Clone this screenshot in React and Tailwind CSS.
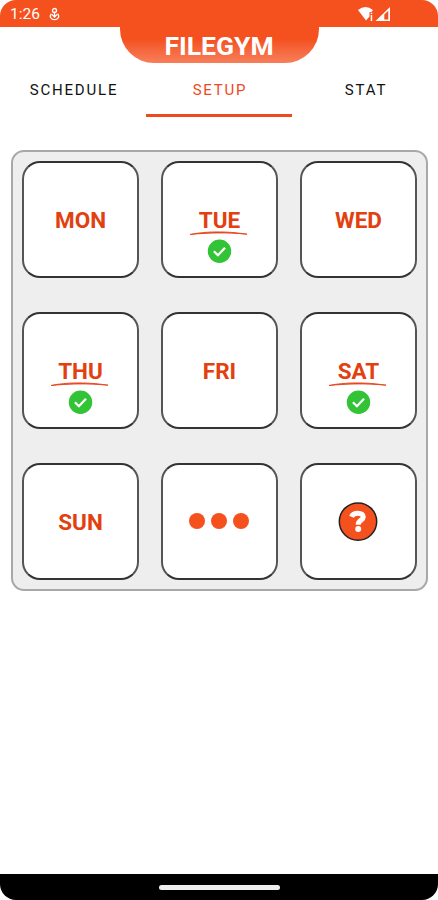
import React, { useState } from "react";

const TABS = ["SCHEDULE", "SETUP", "STAT"];

const DAYS = [
  { name: "MON", done: false },
  { name: "TUE", done: true },
  { name: "WED", done: false },
  { name: "THU", done: true },
  { name: "FRI", done: false },
  { name: "SAT", done: true },
  { name: "SUN", done: false },
];

function Card({ children }) {
  return (
    <button className="relative flex size-[117px] items-center justify-center rounded-[18px] border-2 border-x-[#555] border-y-[#333] bg-white">
      {children}
    </button>
  );
}

function DoneMark() {
  return (
    <svg className="absolute left-[26px] top-[66px]" width="60" height="36" viewBox="0 0 60 36" fill="none">
      <path d="M1 5.5C16 2.2 38 2 58 5.2C38 3.2 17 3.8 1 5.5Z" fill="#e8431a" stroke="#e8431a" strokeWidth="0.9" strokeLinejoin="round" />
      <circle cx="30.5" cy="22.2" r="11.7" fill="#32c337" />
      <path d="M24.9 22.2L28.9 26.2L36 18.8" stroke="#fff" strokeWidth="2.3" />
    </svg>
  );
}

function Day({ name, done }) {
  return (
    <Card>
      <span className="pl-px pt-[2px] text-[22.5px] font-bold leading-none text-[#e2400f]">{name}</span>
      {done && <DoneMark />}
    </Card>
  );
}

export default function App() {
  const [tab, setTab] = useState("SETUP");

  return (
    <div className="flex h-[900px] w-[438px] flex-col overflow-hidden rounded-[16px] bg-white font-[Roboto,sans-serif]">
      {/* Status bar */}
      <div className="flex h-[27px] shrink-0 items-center bg-[#f4511e] pl-[10px] text-white">
        <span className="pt-[2px] text-[15.5px] leading-none">1:26</span>
        <svg className="ml-[9px] mt-[1px]" width="11" height="14" viewBox="0 0 11 14" fill="none" stroke="#fff" strokeWidth="1.3">
          <circle cx="5.5" cy="3.5" r="2" />
          <path d="M5.5 5.5V10M3 7.5L5.5 10L8 7.5" />
          <path d="M2.5 6.8C-0.2 9.5 2.2 12.6 5.5 12.6S11.2 9.5 8.5 6.8" />
        </svg>
        <svg className="ml-auto mr-[47px]" width="34" height="16" viewBox="0 0 34 16" fill="#fff">
          <path d="M1 4Q8.5 -2 16 4L14.5 6H12.5V10.5L9 14.5Z" />
          <path d="M13.7 9H15.2V15H13.7ZM13.7 6.8H15.2V8.1H13.7Z" />
          <path fillRule="evenodd" d="M18.5 15L33 1V15ZM27.3 8.6V13.5H31.3V4.7Z" />
        </svg>
      </div>

      {/* Title */}
      <div className="mx-auto flex h-[36px] w-[199px] shrink-0 items-center justify-center rounded-b-[34px] bg-linear-to-b from-[#f4511e] from-35% to-[#f77e59]">
        <h1 className="pt-[2px] text-[26.5px] font-bold leading-none text-white">FILEGYM</h1>
      </div>

      {/* Tabs */}
      <div className="grid h-[54px] shrink-0 grid-cols-3">
        {TABS.map(t => (
          <button key={t} onClick={() => setTab(t)}
            className={`border-b-[3px] pl-[2px] pt-[3px] text-[15px] tracking-[1.8px] ${t === tab ? "border-[#ee4a22] text-[#ee4a22]" : "border-transparent text-[#111]"}`}>
            {t}
          </button>
        ))}
      </div>

      {/* Week */}
      <div className="mx-auto mt-[33px] grid h-[441px] w-[417px] shrink-0 grid-cols-[117px_117px_117px] content-start gap-x-[22px] gap-y-[34px] rounded-[13px] border-2 border-[#a8a8a8] bg-[#eee] px-[9px] pt-[9px]">
        {DAYS.map(d => <Day key={d.name} {...d} />)}
        <Card>
          <div className="flex gap-[6px] pb-px">
            <span className="size-4 rounded-full bg-[#f4511e]" />
            <span className="size-4 rounded-full bg-[#f4511e]" />
            <span className="size-4 rounded-full bg-[#f4511e]" />
          </div>
        </Card>
        <Card>
          <svg width="40" height="40" viewBox="0 0 40 40" fill="none">
            <circle cx="20" cy="19.6" r="18.7" fill="#f4511e" stroke="#222" strokeWidth="1.5" />
            <path d="M13.5 14.7C15.5 9.9 25.3 9.9 25.3 15.1C25.3 18.3 20.2 18.1 20.2 22.7" stroke="#fff" strokeWidth="5" />
            <circle cx="20.2" cy="27" r="3" fill="#fff" />
          </svg>
        </Card>
      </div>

      {/* Navigation bar */}
      <div className="mt-auto flex h-[26px] shrink-0 items-center justify-center bg-black">
        <div className="h-[5px] w-[121px] rounded-full bg-[#eee]" />
      </div>
    </div>
  );
}
